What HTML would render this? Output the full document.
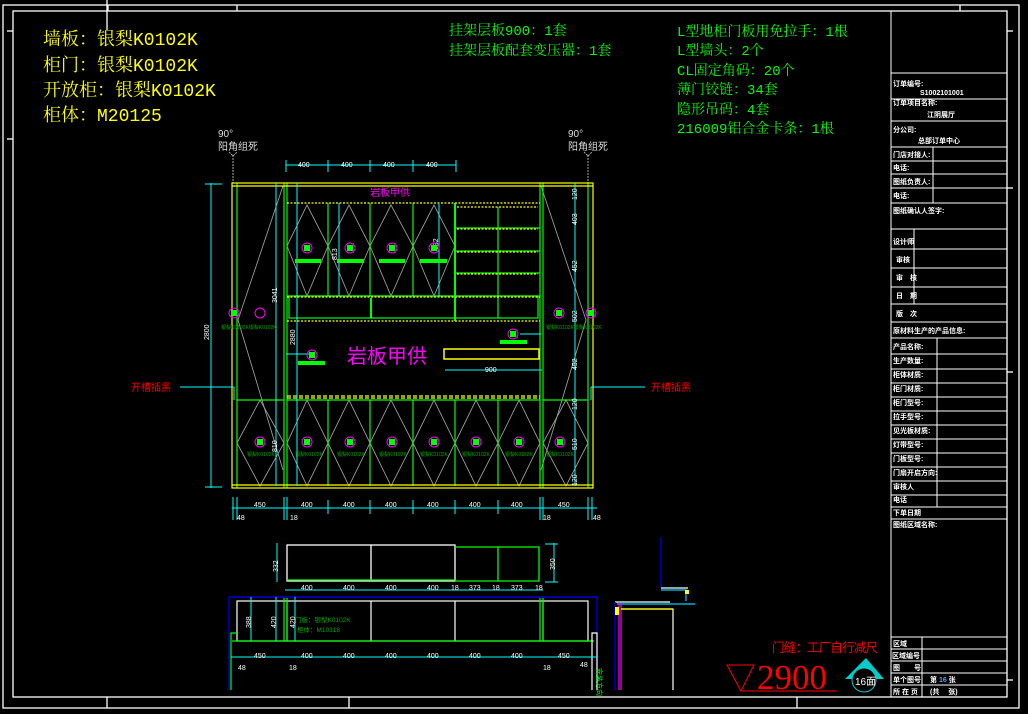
<!DOCTYPE html>
<html><head><meta charset="utf-8"><style>
html,body{margin:0;padding:0;background:#000;width:1028px;height:714px;overflow:hidden}
svg{display:block}
text{font-family:"Liberation Sans","Noto Sans CJK SC",sans-serif}
.s{font-family:"Liberation Serif","Noto Serif CJK SC",serif}
.m{font-family:"Liberation Mono","Noto Serif CJK SC",monospace}
.tb{fill:#fff;font-size:7px;font-weight:bold}
</style></head><body>
<svg width="1028" height="714" viewBox="0 0 1028 714" xmlns="http://www.w3.org/2000/svg">
<g fill="none" stroke="#fff" stroke-width="1.3">
<rect x="3" y="5" width="1016" height="703"/>
<rect x="13" y="11" width="994" height="686"/>
<line x1="1007" y1="31" x2="1013" y2="31"/><line x1="1007" y1="188" x2="1013" y2="188"/><line x1="1007" y1="372" x2="1013" y2="372"/><line x1="1007" y1="680" x2="1013" y2="680"/>
<line x1="7" y1="31" x2="13" y2="31"/><line x1="7" y1="139" x2="13" y2="139"/>
<line x1="108" y1="5" x2="108" y2="11"/><line x1="237" y1="5" x2="237" y2="11"/><line x1="960" y1="5" x2="960" y2="11"/>
<line x1="107" y1="697" x2="107" y2="708"/><line x1="349" y1="697" x2="349" y2="708"/><line x1="797" y1="697" x2="797" y2="708"/>
<line x1="107" y1="0" x2="107" y2="30"/>
</g>
<g fill="none" stroke="#fff" stroke-width="1">
<rect x="891" y="11" width="116" height="686"/>
<line x1="891" y1="73" x2="1007" y2="73"/><line x1="891" y1="99" x2="1007" y2="99"/><line x1="891" y1="121" x2="1007" y2="121"/>
<line x1="891" y1="147" x2="1007" y2="147"/><line x1="891" y1="161" x2="1007" y2="161"/><line x1="891" y1="174" x2="1007" y2="174"/>
<line x1="891" y1="188" x2="1007" y2="188"/><line x1="891" y1="203" x2="1007" y2="203"/><line x1="891" y1="229" x2="1007" y2="229"/>
<line x1="891" y1="249" x2="1007" y2="249"/><line x1="891" y1="268" x2="1007" y2="268"/><line x1="891" y1="287" x2="1007" y2="287"/>
<line x1="891" y1="304" x2="1007" y2="304"/><line x1="891" y1="322" x2="1007" y2="322"/><line x1="891" y1="338" x2="1007" y2="338"/>
<line x1="891" y1="354" x2="1007" y2="354"/><line x1="891" y1="369" x2="1007" y2="369"/><line x1="891" y1="383" x2="1007" y2="383"/>
<line x1="891" y1="397" x2="1007" y2="397"/><line x1="891" y1="411" x2="1007" y2="411"/><line x1="891" y1="425" x2="1007" y2="425"/>
<line x1="891" y1="439" x2="1007" y2="439"/><line x1="891" y1="453" x2="1007" y2="453"/><line x1="891" y1="467" x2="1007" y2="467"/>
<line x1="891" y1="481" x2="1007" y2="481"/><line x1="891" y1="495" x2="1007" y2="495"/><line x1="891" y1="507" x2="1007" y2="507"/>
<line x1="891" y1="519" x2="1007" y2="519"/><line x1="891" y1="637" x2="1007" y2="637"/><line x1="891" y1="649" x2="1007" y2="649"/>
<line x1="891" y1="661" x2="1007" y2="661"/><line x1="891" y1="673" x2="1007" y2="673"/><line x1="891" y1="685" x2="1007" y2="685"/>
<line x1="933" y1="147" x2="933" y2="203"/><line x1="914" y1="229" x2="914" y2="304"/><line x1="937" y1="338" x2="937" y2="507"/>
<line x1="922" y1="637" x2="922" y2="697"/>
</g>
<g class="tb">
<text x="893" y="86">订单编号:</text><text x="920" y="95">S1002101001</text>
<text x="893" y="105">订单项目名称:</text><text x="927" y="117">江阴展厅</text>
<text x="893" y="132">分公司:</text><text x="918" y="143">总部订单中心</text>
<text x="893" y="157">门店对接人:</text><text x="893" y="170">电话:</text><text x="893" y="184">图纸负责人:</text><text x="893" y="198">电话:</text>
<text x="893" y="213">图纸确认人签字:</text>
<text x="893" y="244">设计师</text><text x="896" y="262">审核</text><text x="896" y="280">审　核</text><text x="896" y="298">日　期</text><text x="896" y="316">版　次</text>
<text x="893" y="333">原材料生产的产品信息:</text>
<text x="893" y="349">产品名称:</text><text x="893" y="363">生产数量:</text><text x="893" y="377">柜体材质:</text><text x="893" y="391">柜门材质:</text>
<text x="893" y="405">柜门型号:</text><text x="893" y="419">拉手型号:</text><text x="893" y="433">见光板材质:</text><text x="893" y="447">灯带型号:</text>
<text x="893" y="461">门板型号:</text><text x="893" y="475">门扇开启方向:</text><text x="893" y="489">审核人</text><text x="893" y="502">电话</text><text x="893" y="515">下单日期</text>
<text x="893" y="527">图纸区域名称:</text>
<text x="893" y="646">区域</text><text x="892" y="658">区域编号</text><text x="893" y="670">图　　号</text><text x="893" y="682">单个图号</text><text x="893" y="694">所 在 页</text>
<text x="930" y="682">第 <tspan fill="#4af">16</tspan> 张</text><text x="930" y="694">(共　 张)</text>
</g>
<g font-size="18" fill="#ff0">
<text x="43" y="45" class="m">墙板：银梨K0102K</text>
<text x="43" y="71" class="m">柜门：银梨K0102K</text>
<text x="43" y="96" class="m">开放柜：银梨K0102K</text>
<text x="43" y="121" class="m">柜体：M20125</text>
</g>
<g font-size="14.5" fill="#0f0">
<text x="449" y="35" class="m" font-size="14">挂架层板900：1套</text>
<text x="449" y="55" class="m" font-size="14">挂架层板配套变压器：1套</text>
<text x="677" y="36" class="m" font-size="14">L型地柜门板用免拉手：1根</text>
<text x="677" y="55" class="m" font-size="14">L型墙头：2个</text>
<text x="677" y="75" class="m" font-size="14">CL固定角码：20个</text>
<text x="677" y="94" class="m" font-size="14">薄门铰链：34套</text>
<text x="677" y="114" class="m" font-size="14">隐形吊码：4套</text>
<text x="677" y="133" class="m" font-size="14">216009铝合金卡条：1根</text>
</g>
<g fill="#ddd" font-size="10"><text x="218" y="137">90°</text><text x="218" y="150">阳角组死</text><text x="568" y="137">90°</text><text x="568" y="150">阳角组死</text></g>
<g stroke="#aa8" fill="none"><path d="M233 155v28M229 152l4 4 4-4M588 155v28M584 152l4 4 4-4" stroke-dasharray="2 1"/></g>
<g stroke="#999" stroke-width="0.9" fill="none">
<path d="M283 186L238 320L283 470"/><path d="M541 186L586 320L541 470"/>
<path d="M287 246L307 205L328 246L307 296L287 246M328 246L349 205L370 246L349 296L328 246M370 246L391 205L413 246L391 296L370 246M413 246L434 205L455 246L434 296L413 246"/>
<path d="M287 443L307 400L328 443L307 486L287 443M328 443L349 400L370 443L349 486L328 443M370 443L391 400L413 443L391 486L370 443M413 443L434 400L455 443L434 486L413 443M455 443L476 400L498 443L476 486L455 443M498 443L519 400L540 443L519 486L498 443"/>
<path d="M237 443L260 400L284 443L260 486Z"/><path d="M543 443L566 400L588 443L566 486Z"/>
</g>
<g stroke="#0f0" fill="none" stroke-width="1.2">
<line x1="237" y1="183" x2="237" y2="488"/><line x1="284" y1="183" x2="284" y2="488"/><line x1="287" y1="183" x2="287" y2="488"/>
<line x1="540" y1="183" x2="540" y2="488"/><line x1="543" y1="183" x2="543" y2="488"/><line x1="588" y1="183" x2="588" y2="488"/>
<line x1="287" y1="296" x2="540" y2="296"/><line x1="287" y1="400" x2="540" y2="400"/><line x1="237" y1="400" x2="284" y2="400"/><line x1="543" y1="400" x2="588" y2="400"/>
<line x1="328" y1="203" x2="328" y2="296"/><line x1="370" y1="203" x2="370" y2="296"/><line x1="413" y1="203" x2="413" y2="296"/>
<line x1="455" y1="203" x2="455" y2="321" stroke-width="2"/><line x1="498" y1="207" x2="498" y2="318"/>
<rect x="289" y="296" width="249" height="22"/><line x1="371" y1="298" x2="371" y2="318" stroke-width="2"/>
<line x1="328" y1="400" x2="328" y2="486"/><line x1="370" y1="400" x2="370" y2="486"/><line x1="413" y1="400" x2="413" y2="486"/><line x1="455" y1="400" x2="455" y2="486"/><line x1="498" y1="400" x2="498" y2="486"/>
<line x1="455" y1="228" x2="540" y2="228"/><line x1="455" y1="251" x2="540" y2="251"/><line x1="455" y1="273" x2="540" y2="273"/>
</g>
<g stroke="#ff0" fill="none" stroke-width="1.2">
<rect x="232" y="183" width="361" height="305"/><line x1="232" y1="186" x2="593" y2="186"/><line x1="232" y1="485" x2="593" y2="485"/>
<line x1="287" y1="203" x2="540" y2="203" stroke-dasharray="2 1.5"/><line x1="287" y1="321" x2="540" y2="321" stroke-dasharray="2 1.5"/>
<line x1="287" y1="297" x2="540" y2="297" stroke-dasharray="2 1.5"/>
<line x1="457" y1="207" x2="538" y2="207" stroke-dasharray="2 1.5"/><line x1="457" y1="229" x2="538" y2="229" stroke-dasharray="2 1.5"/><line x1="457" y1="252" x2="538" y2="252" stroke-dasharray="2 1.5"/><line x1="457" y1="274" x2="538" y2="274" stroke-dasharray="2 1.5"/>
<line x1="287" y1="396" x2="540" y2="396" stroke-dasharray="4 2"/><line x1="287" y1="398" x2="540" y2="398" stroke-dasharray="4 2"/>
<rect x="444" y="349" width="95" height="10" stroke-width="1.5"/>
</g>
<g stroke="#0ff" fill="none" stroke-width="1">
<line x1="211" y1="183" x2="211" y2="488"/><line x1="205" y1="184" x2="222" y2="184"/><line x1="205" y1="487" x2="222" y2="487"/>
<line x1="276" y1="183" x2="276" y2="486"/><line x1="297" y1="183" x2="297" y2="486"/><line x1="575" y1="183" x2="575" y2="486"/>
<line x1="286" y1="165" x2="456" y2="165"/><line x1="286" y1="160" x2="286" y2="172"/><line x1="328" y1="160" x2="328" y2="172"/><line x1="370" y1="160" x2="370" y2="172"/><line x1="413" y1="160" x2="413" y2="172"/><line x1="456" y1="160" x2="456" y2="172"/>
<line x1="339" y1="203" x2="339" y2="296"/><line x1="439" y1="203" x2="439" y2="296"/>
<line x1="232" y1="508" x2="597" y2="508"/><line x1="233" y1="497" x2="233" y2="520"/><line x1="237" y1="497" x2="237" y2="520"/><line x1="284" y1="497" x2="284" y2="520"/><line x1="287" y1="497" x2="287" y2="520"/><line x1="328" y1="500" x2="328" y2="514"/><line x1="370" y1="500" x2="370" y2="514"/><line x1="413" y1="500" x2="413" y2="514"/><line x1="455" y1="500" x2="455" y2="514"/><line x1="498" y1="500" x2="498" y2="514"/><line x1="540" y1="497" x2="540" y2="520"/><line x1="543" y1="497" x2="543" y2="520"/><line x1="588" y1="497" x2="588" y2="520"/><line x1="592" y1="497" x2="592" y2="520"/>
<line x1="180" y1="387" x2="234" y2="387"/><line x1="234" y1="387" x2="234" y2="400"/><line x1="591" y1="387" x2="645" y2="387"/><line x1="591" y1="387" x2="591" y2="400"/>
<line x1="445" y1="370" x2="542" y2="370"/><line x1="286" y1="354" x2="310" y2="354"/><line x1="520" y1="334" x2="541" y2="334"/>
</g>
<g fill="#fff" font-size="7"><text x="298" y="167">400</text><text x="341" y="167">400</text><text x="383" y="167">400</text><text x="426" y="167">400</text>
<text x="254" y="507">450</text><text x="301" y="507">400</text><text x="343" y="507">400</text><text x="385" y="507">400</text><text x="427" y="507">400</text><text x="469" y="507">400</text><text x="511" y="507">400</text><text x="558" y="507">450</text>
<text x="237" y="520">48</text><text x="290" y="520">18</text><text x="543" y="520">18</text><text x="593" y="520">48</text><text x="485" y="372">900</text></g>
<g fill="#fff" font-size="7"><text transform="translate(209 340) rotate(-90)">2800</text><text transform="translate(277 303) rotate(-90)">3041</text><text transform="translate(295 345) rotate(-90)">2880</text><text transform="translate(277 452) rotate(-90)">810</text><text transform="translate(337 260) rotate(-90)">813</text><text transform="translate(438 250) rotate(-90)">632</text>
<text transform="translate(577 200) rotate(-90)">120</text><text transform="translate(577 225) rotate(-90)">403</text><text transform="translate(577 272) rotate(-90)">452</text><text transform="translate(577 322) rotate(-90)">502</text><text transform="translate(577 370) rotate(-90)">452</text><text transform="translate(577 410) rotate(-90)">120</text><text transform="translate(577 450) rotate(-90)">510</text><text transform="translate(577 486) rotate(-90)">120</text></g>
<g stroke="#f0f" fill="none" stroke-width="1">
<circle cx="307" cy="248" r="5"/><circle cx="350" cy="248" r="5"/><circle cx="392" cy="248" r="5"/><circle cx="434" cy="248" r="5"/>
<circle cx="260" cy="442" r="5"/><circle cx="307" cy="442" r="5"/><circle cx="350" cy="442" r="5"/><circle cx="392" cy="442" r="5"/><circle cx="434" cy="442" r="5"/><circle cx="476" cy="442" r="5"/><circle cx="519" cy="442" r="5"/><circle cx="560" cy="442" r="5"/>
<circle cx="234" cy="313" r="5"/><circle cx="260" cy="313" r="5"/><circle cx="559" cy="313" r="5"/><circle cx="591" cy="313" r="5"/><circle cx="312" cy="355" r="5"/><circle cx="513" cy="334" r="5"/>
</g>
<g fill="#0f0">
<rect x="304" y="245" width="6" height="6"/><rect x="347" y="245" width="6" height="6"/><rect x="389" y="245" width="6" height="6"/><rect x="431" y="245" width="6" height="6"/>
<rect x="257" y="439" width="6" height="6"/><rect x="304" y="439" width="6" height="6"/><rect x="347" y="439" width="6" height="6"/><rect x="389" y="439" width="6" height="6"/><rect x="431" y="439" width="6" height="6"/><rect x="473" y="439" width="6" height="6"/><rect x="516" y="439" width="6" height="6"/><rect x="557" y="439" width="6" height="6"/>
<rect x="231" y="310" width="6" height="6"/><rect x="556" y="310" width="6" height="6"/><rect x="588" y="310" width="6" height="6"/><rect x="309" y="352" width="6" height="6"/><rect x="510" y="331" width="6" height="6"/>
<rect x="295" y="259" width="26" height="4"/><rect x="337" y="259" width="27" height="4"/><rect x="379" y="259" width="26" height="4"/><rect x="420" y="259" width="27" height="4"/>
<rect x="298" y="361" width="27" height="4"/><rect x="500" y="340" width="27" height="4"/>
</g>
<g fill="#0a0" font-size="5"><text x="221" y="329">银梨K0102K银梨K0102K</text><text x="546" y="329">银梨K0102K银梨K0102K</text>
<text x="247" y="456">银梨K0102K</text><text x="295" y="456">银梨K0102K</text><text x="337" y="456">银梨K0102K</text><text x="379" y="456">银梨K0102K</text><text x="420" y="456">银梨K0102K</text><text x="462" y="456">银梨K0102K</text><text x="505" y="456">银梨K0102K</text><text x="546" y="456">银梨K0102K</text></g>
<text x="370" y="196" fill="#f0f" font-size="10">岩板甲供</text>
<text x="347" y="363" fill="#f0f" font-size="20">岩板甲供</text>
<text x="131" y="391" fill="#f00" font-size="10">开槽插黑</text><text x="651" y="391" fill="#f00" font-size="10">开槽插黑</text>
<g fill="none" stroke-width="1.3">
<rect x="287" y="545" width="168" height="36" stroke="#fff"/><line x1="371" y1="545" x2="371" y2="581" stroke="#fff"/>
<path d="M455 547H539V581H455M498 547V581" stroke="#0f0"/><line x1="287" y1="580" x2="455" y2="580" stroke="#0f0"/>
<g stroke="#0ff" stroke-width="1"><line x1="285" y1="590" x2="543" y2="590"/><line x1="277" y1="543" x2="277" y2="582"/><line x1="554" y1="543" x2="554" y2="582"/><line x1="545" y1="544" x2="558" y2="544"/><line x1="545" y1="582" x2="558" y2="582"/></g>
</g>
<g fill="#fff" font-size="7"><text x="301" y="590">400</text><text x="343" y="590">400</text><text x="385" y="590">400</text><text x="427" y="590">400</text><text x="451" y="590">18</text><text x="469" y="590">373</text><text x="492" y="590">18</text><text x="511" y="590">373</text><text x="535" y="590">18</text>
<text transform="translate(278 572) rotate(-90)">332</text><text transform="translate(555 570) rotate(-90)">350</text></g>
<g fill="none" stroke-width="1.2">
<path d="M229 690V597H597V690" stroke="#00f"/>
<rect x="237" y="601" width="351" height="40" stroke="#fff"/><line x1="287" y1="601" x2="287" y2="641" stroke="#fff"/><line x1="371" y1="601" x2="371" y2="641" stroke="#fff"/><line x1="455" y1="601" x2="455" y2="641" stroke="#fff"/><line x1="543" y1="601" x2="543" y2="641" stroke="#fff"/>
<path d="M231 690V633H237M232 641H594M284 598V641M287 598V641M540 598V641M543 598V641" stroke="#0f0"/>
<path d="M592 690V633H597V690" stroke="#fff"/>
<g stroke="#0ff" stroke-width="1"><line x1="231" y1="657" x2="597" y2="657"/><line x1="251" y1="597" x2="251" y2="641"/><line x1="276" y1="597" x2="276" y2="641"/><line x1="295" y1="597" x2="295" y2="641"/></g>
</g>
<g fill="#fff" font-size="7"><text x="254" y="658">450</text><text x="301" y="658">400</text><text x="343" y="658">400</text><text x="385" y="658">400</text><text x="427" y="658">400</text><text x="469" y="658">400</text><text x="511" y="658">400</text><text x="558" y="658">450</text>
<text x="238" y="670">48</text><text x="289" y="670">18</text><text x="543" y="670">18</text><text x="580" y="667">48</text>
<text transform="translate(251 628) rotate(-90)">388</text><text transform="translate(276 628) rotate(-90)">420</text><text transform="translate(295 628) rotate(-90)">420</text></g>
<g fill="#0a0" font-size="6.5"><text x="295" y="622">门板：银梨K0102K</text><text x="297" y="632">柜体：M10318</text></g>
<text transform="translate(597 668) rotate(90)" fill="#0f0" font-size="7">安装方向</text>
<g fill="none" stroke-width="1.2">
<path d="M661 537V588" stroke="#00f"/><path d="M661 588H688M615 602H670" stroke="#fff"/><path d="M661 590H686V601M617 604H695" stroke="#0cf"/>
<path d="M615 602V690" stroke="#00f"/><path d="M619 604V690M621 604V690" stroke="#f0f"/><path d="M621 609H673V690" stroke="#fff"/><line x1="621" y1="609" x2="673" y2="609" stroke="#ff0"/>
</g>
<rect x="615" y="607" width="4" height="8" fill="#ff0"/><rect x="685" y="590" width="4" height="4" fill="#ff0"/>
<text x="772" y="652" fill="#f00" font-size="12.5" textLength="106">门缝：工厂自行减尺</text>
<path d="M727 665H754L741 691Z" fill="none" stroke="#f00" stroke-width="1"/><line x1="741" y1="691" x2="837" y2="691" stroke="#f00"/>
<text x="757" y="689" fill="#f00" font-size="35" class="s">2900</text>
<path d="M845 679L866 658L884 679" fill="#0cc"/><circle cx="864" cy="680" r="12" fill="#000" stroke="#0cc"/>
<text x="855" y="685" fill="#fff" font-size="10">16面</text>
</svg>
</body></html>
